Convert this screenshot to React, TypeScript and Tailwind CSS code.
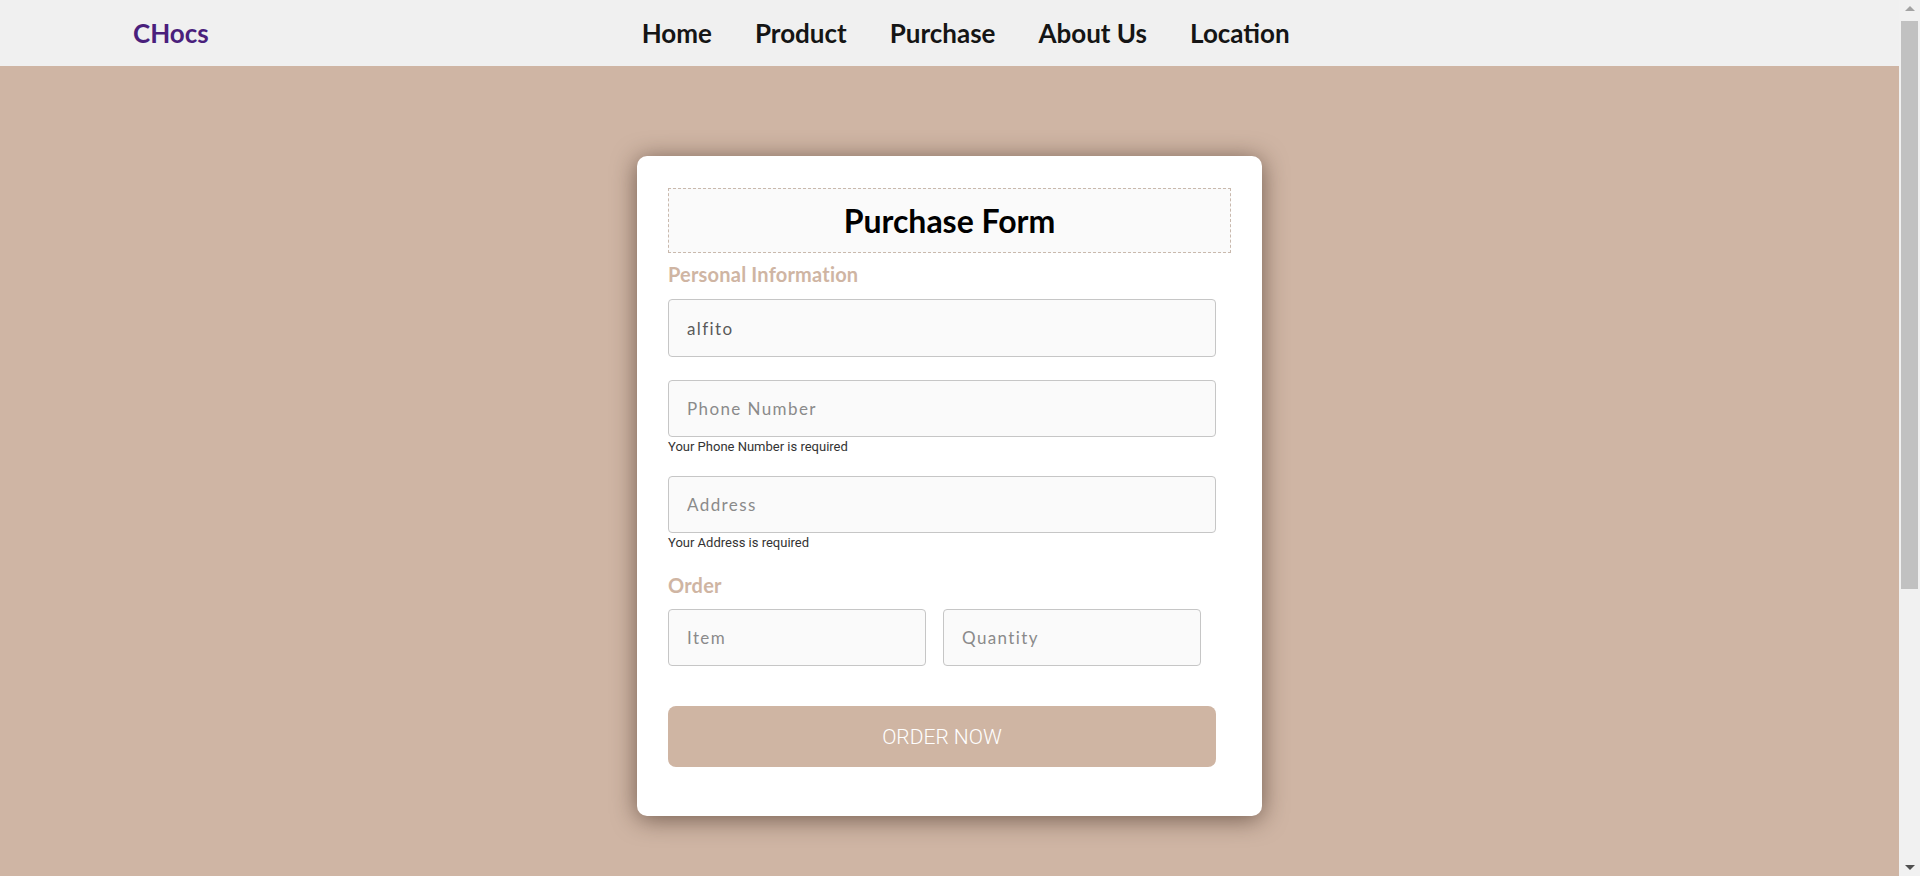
import React from "react";

const q = { fontFamily: "Lato, 'Noto Sans', sans-serif" };
const r = { fontFamily: "Roboto, 'Noto Sans', sans-serif" };

function Field({ placeholder, value, className = "" }: { placeholder: string; value?: string; className?: string }) {
  return (
    <input
      readOnly
      defaultValue={value}
      placeholder={placeholder}
      style={q}
      className={`block h-[57px] rounded-[4px] border border-[#c6c6c6] bg-[#fafafa] pl-[18px] text-[17px] tracking-[1.4px] text-[#5a5a5a] placeholder:text-[#8a8a8a] outline-none ${className}`}
    />
  );
}

function Scrollbar() {
  return (
    <div className="fixed top-0 right-0 flex h-[876px] w-[21px] flex-col items-center bg-[#f1f1f1]">
      <div className="mt-[6px] h-0 w-0 border-x-[5px] border-b-[5px] border-x-transparent border-b-[#a3a3a3]" />
      <div className="mt-[10px] h-[568px] w-[17px] bg-[#c1c1c1]" />
      <div className="mt-auto mb-[6px] h-0 w-0 border-x-[5px] border-t-[5px] border-x-transparent border-t-[#505050]" />
    </div>
  );
}

export default function App() {
  return (
    <div className="mr-[21px] min-h-screen bg-[#cfb5a4]">
      <header className="flex h-[66px] items-center bg-[#f0f0f0] pl-[133px]" style={q}>
        <div className="text-[26px] font-bold text-[#4a1f7c]">CHocs</div>
        <nav className="ml-[433px] flex gap-[43px] text-[26px] font-bold text-[#151515]">
          <a>Home</a>
          <a>Product</a>
          <a>Purchase</a>
          <a>About Us</a>
          <a>Location</a>
        </nav>
      </header>
      <main className="flex justify-center pt-[90px] pb-[60px]">
        <div className="flex w-[625px] flex-col rounded-[10px] bg-white px-[31px] pt-[32px] pb-[49px] shadow-[0_3px_24px_rgba(50,30,20,0.6)]">
          <div className="flex h-[65px] items-center justify-center border border-dashed border-[#c9b9ad] bg-[#fafafa]">
            <h1 style={q} className="text-[32px] font-bold text-black">Purchase Form</h1>
          </div>
          <div style={q} className="mt-[9px] text-[20px] font-bold leading-[24px] tracking-[0.2px] text-[#cfb5a3]">Personal Information</div>
          <Field placeholder="Name" value="alfito" className="mt-[13px] h-[58px] w-[548px]" />
          <Field placeholder="Phone Number" className="mt-[23px] w-[548px]" />
          <div style={r} className="mt-[3px] text-[13px] leading-[14px] text-[#333]">Your Phone Number is required</div>
          <Field placeholder="Address" className="mt-[22px] w-[548px]" />
          <div style={r} className="mt-[3px] text-[13px] leading-[14px] text-[#333]">Your Address is required</div>
          <div style={q} className="mt-[23px] text-[20px] font-bold leading-[24px] tracking-[0.2px] text-[#cfb5a3]">Order</div>
          <div className="mt-[12px] flex gap-[17px]">
            <Field placeholder="Item" className="w-[258px]" />
            <Field placeholder="Quantity" className="w-[258px]" />
          </div>
          <button
            style={r}
            className="mt-[40px] h-[61px] w-[548px] rounded-[8px] bg-[#cfb5a3] pt-[3px] text-[21px] font-light text-white"
          >
            ORDER NOW
          </button>
        </div>
      </main>
      <Scrollbar />
    </div>
  );
}
